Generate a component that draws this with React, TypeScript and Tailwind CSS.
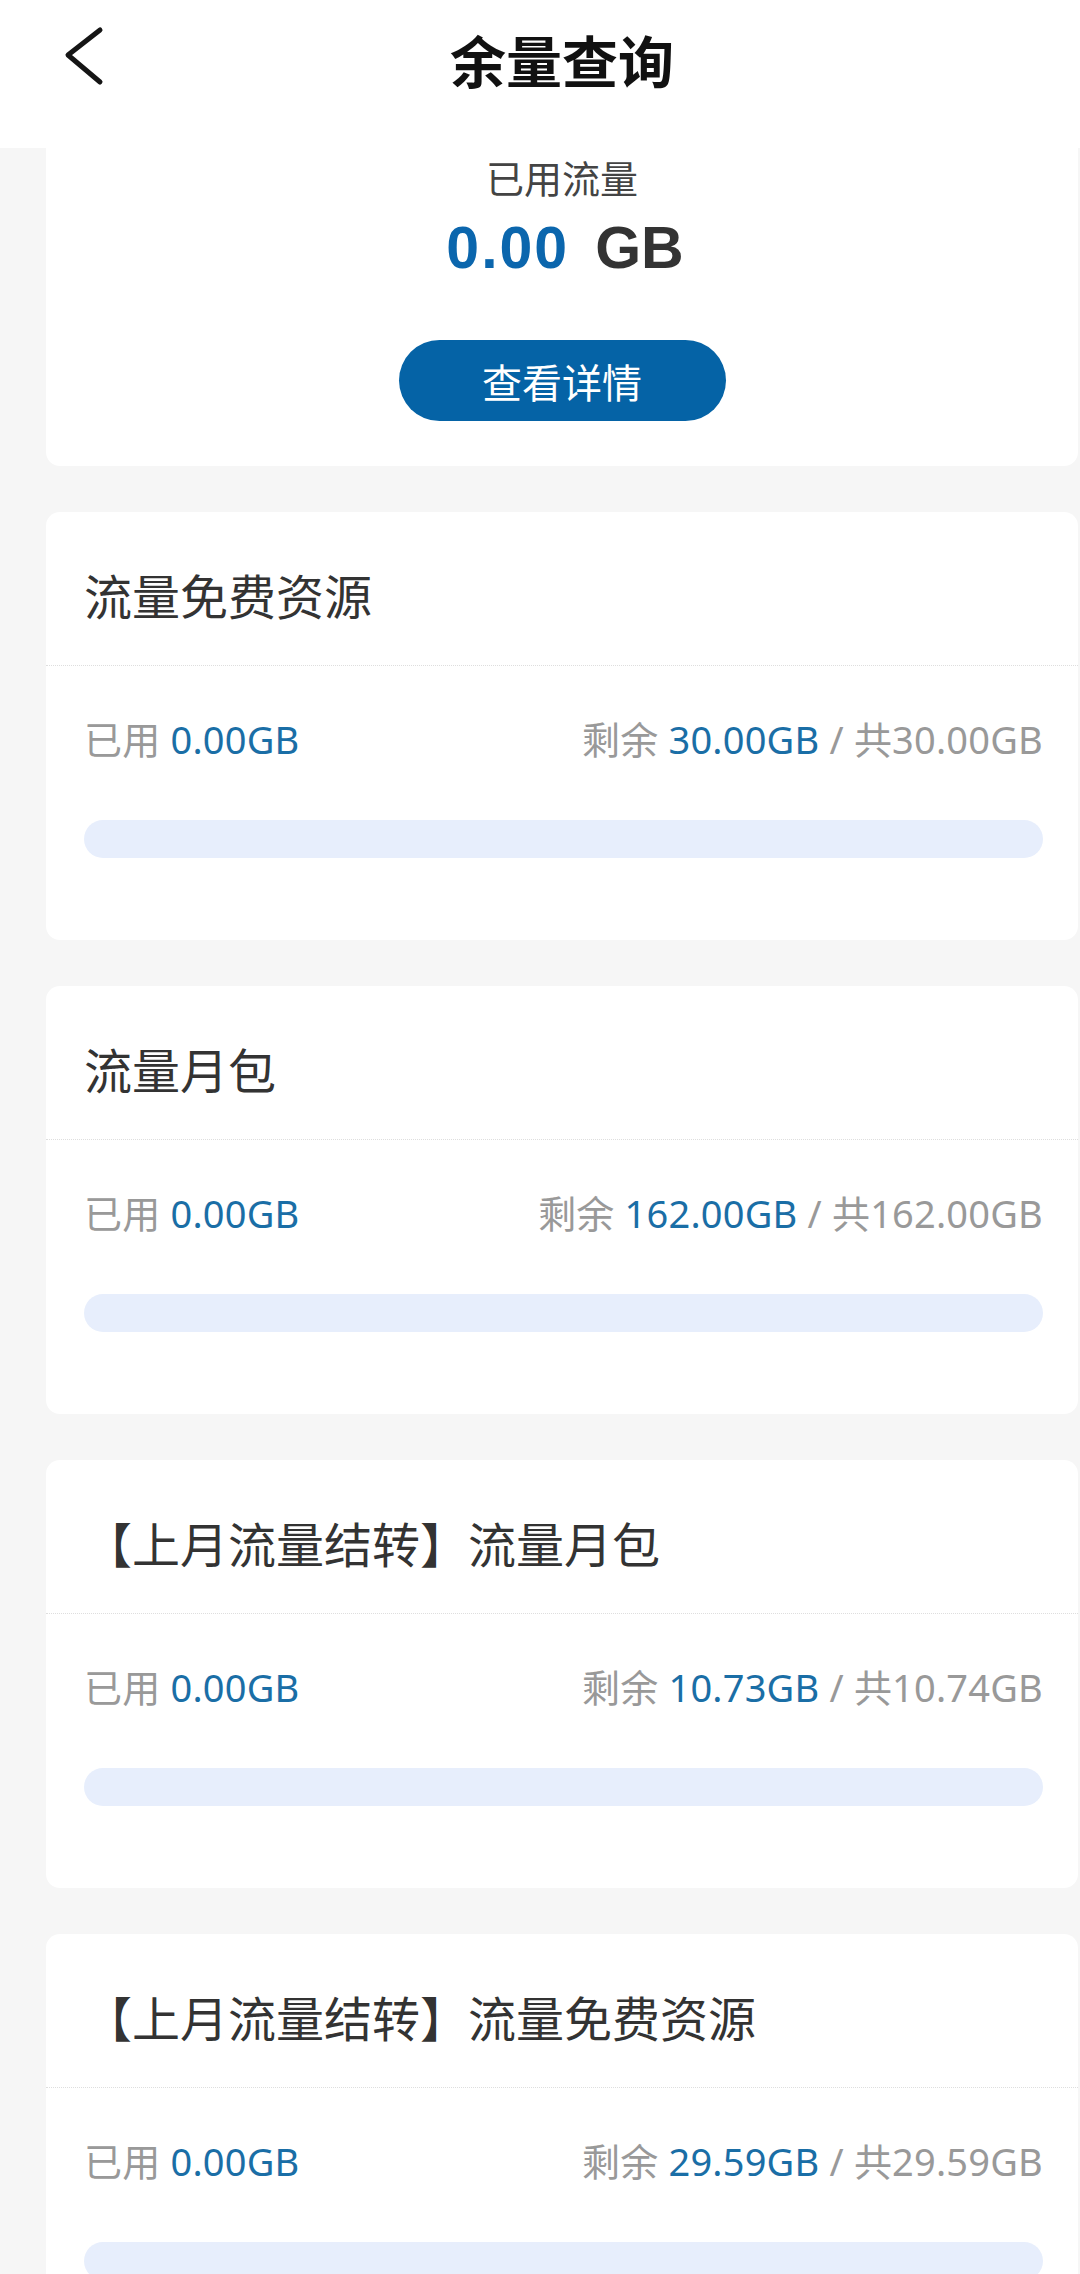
import React from "react";

type Item = { title: string; used: string; left: string; total: string };

const items: Item[] = [
  { title: "流量免费资源", used: "0.00GB", left: "30.00GB", total: "30.00GB" },
  { title: "流量月包", used: "0.00GB", left: "162.00GB", total: "162.00GB" },
  { title: "【上月流量结转】流量月包", used: "0.00GB", left: "10.73GB", total: "10.74GB" },
  { title: "【上月流量结转】流量免费资源", used: "0.00GB", left: "29.59GB", total: "29.59GB" },
];

function Card({ item }: { item: Item }) {
  return (
    <div className="bg-white rounded-[14px] flex flex-col pb-[82px]">
      <div className="pt-[58px] pb-[47px] pl-[38px] text-[48px] leading-[48px] text-[#333] font-['Noto_Sans_CJK_SC',sans-serif]">
        {item.title}
      </div>
      <div className="border-t border-dotted border-[#dedede]" />
      <div className="mt-[55px] pl-[38px] pr-[35px] flex justify-between text-[38px] leading-[37px] tracking-[0.2px] font-['Noto_Sans','Noto_Sans_CJK_SC',sans-serif] text-[#999]">
        <div>
          已用 <span className="text-[#1a6ea6]">{item.used}</span>
        </div>
        <div>
          剩余 <span className="text-[#1a6ea6]">{item.left}</span> / 共{item.total}
        </div>
      </div>
      <div className="mt-[62px] ml-[38px] mr-[35px] h-[38px] rounded-full bg-[#e7eefc]" />
    </div>
  );
}

export default function App() {
  return (
    <div className="w-[1080px] min-h-[2274px] bg-[#f6f6f6] overflow-hidden">
      <header className="h-[148px] bg-white pl-[46px] pr-[2px] grid grid-cols-[1fr_auto_1fr]">
        <div className="pt-[24px] pl-[16px]">
          <svg width="44" height="64" viewBox="0 0 44 64" fill="none">
            <polyline
              points="38,6 6,31 38,58"
              stroke="#151515"
              strokeWidth="5"
              strokeLinecap="round"
              strokeLinejoin="round"
              fill="none"
            />
          </svg>
        </div>
        <div className="pt-[31px] text-[56px] leading-[56px] font-semibold text-[#111] font-['Noto_Sans_CJK_SC',sans-serif]">
          余量查询
        </div>
        <div />
      </header>

      <div className="pl-[46px] pr-[2px] flex flex-col gap-[46px]">
        <div className="bg-white rounded-b-[14px] flex flex-col items-center pt-[10px] pb-[45px]">
          <div className="text-[38px] leading-[38px] text-[#444] font-['Noto_Sans_CJK_SC',sans-serif]">
            已用流量
          </div>
          <div className="mt-[23px] h-[58px] text-[59px] leading-[58px] font-bold font-['Liberation_Sans','Noto_Sans_CJK_SC',sans-serif] flex items-center pl-[6px]">
            <span className="text-[#0b66ad] tracking-[2px]">0.00</span>
            <span className="ml-[26px] text-[#333]">GB</span>
          </div>
          <button className="mt-[63px] w-[327px] h-[81px] rounded-full bg-[#0563a6] text-white text-[40px] leading-[40px] flex items-center justify-center font-['Noto_Sans_CJK_SC',sans-serif]">
            查看详情
          </button>
        </div>

        {items.map((it) => (
          <Card key={it.title} item={it} />
        ))}
      </div>
    </div>
  );
}
